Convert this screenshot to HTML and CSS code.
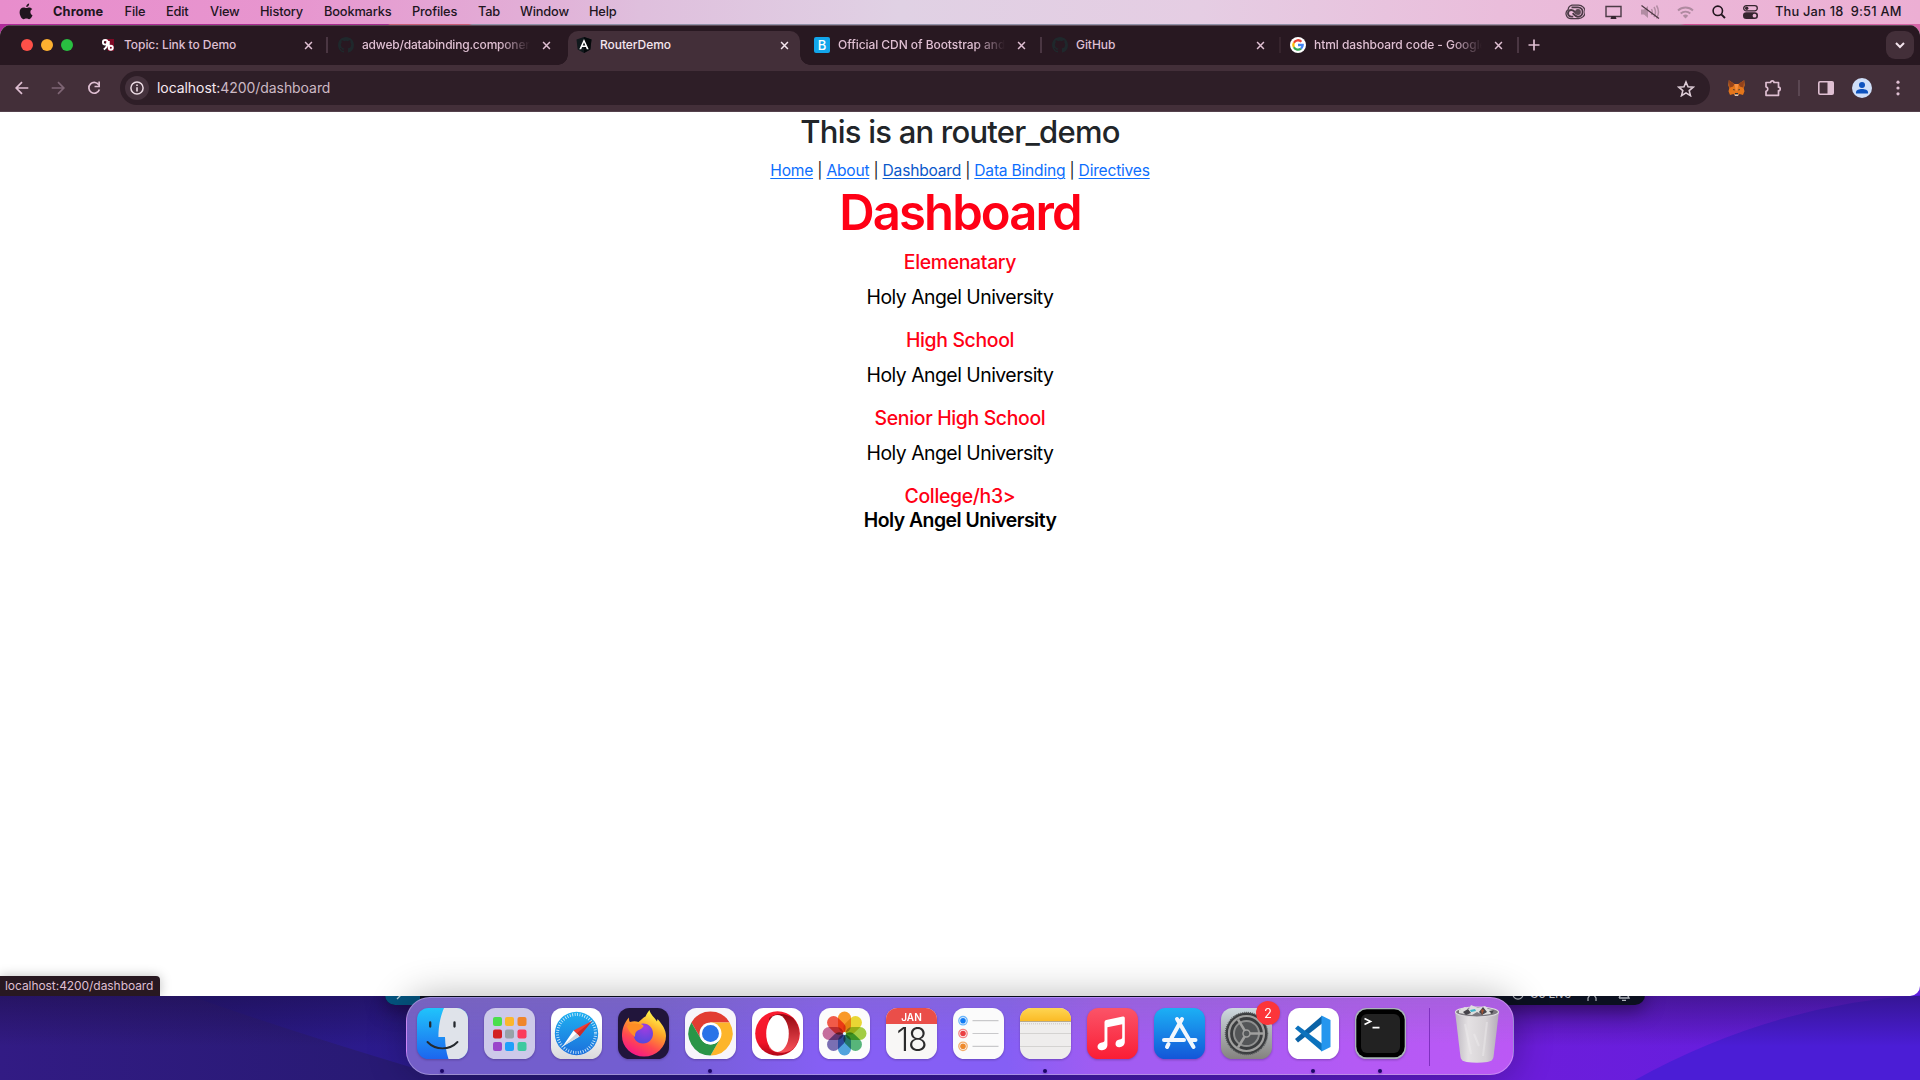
FILE: index.html
```html
<!DOCTYPE html>
<html lang="en">
<head>
<meta charset="utf-8">
<title>RouterDemo</title>
<link rel="stylesheet" href="styles.css">
</head>
<body>
<svg class="defs" aria-hidden="true">
  <defs>
    <symbol id="close" viewBox="0 0 10 10"><path d="M1.2 1.2l7.6 7.6M8.8 1.2L1.2 8.8" fill="none" stroke="currentColor" stroke-width="1.7"/></symbol>
    <symbol id="github" viewBox="0 0 16 16"><path fill="#1f282c" d="M8 0C3.58 0 0 3.58 0 8c0 3.54 2.29 6.53 5.47 7.59.4.07.55-.17.55-.38v-1.49c-2.01.37-2.53-.49-2.69-.94-.09-.23-.48-.94-.82-1.13-.28-.15-.68-.52-.01-.53.63-.01 1.08.58 1.23.82.72 1.21 1.87.87 2.33.66.07-.52.28-.87.51-1.07-1.78-.2-3.64-.89-3.64-3.95 0-.87.31-1.59.82-2.15-.08-.2-.36-1.02.08-2.12 0 0 .67-.21 2.2.82a7.6 7.6 0 0 1 4 0c1.53-1.04 2.2-.82 2.2-.82.44 1.1.16 1.92.08 2.12.51.56.82 1.27.82 2.15 0 3.07-1.87 3.75-3.65 3.95.29.25.54.73.54 1.48v2.2c0 .21.15.46.55.38A8 8 0 0 0 16 8c0-4.42-3.58-8-8-8z"/></symbol>
  </defs>
</svg>

<header class="menubar">
  <svg class="apple" width="14" height="17" viewBox="0 0 14 17"><path fill="#21151e" d="M11.4 8.9c0-1.6 1.2-2.4 1.9-2.8-.8-1.2-2-1.7-3-1.700-1.200 0-2 .7-2.900.7-.9 0-1.700-.7-2.800-.7C2.400 4.400.6 6 .6 9.200c0 3.200 2.200 7 4 7 1 0 1.600-.7 2.800-.7s1.700.7 2.700.7c1.600 0 2.900-2.600 3.400-4-1.300-.5-2.100-1.700-2.100-3.300zM9.400 3C10 2.200 10.200 1.300 10.100.4 8.900.5 7.200 1.600 7.200 4 8.100 4 8.900 3.600 9.400 3z"/></svg>
  <nav class="menus">
    <b>Chrome</b><span>File</span><span>Edit</span><span>View</span><span>History</span><span>Bookmarks</span><span>Profiles</span><span>Tab</span><span>Window</span><span>Help</span>
  </nav>
  <div class="tray">
    <svg width="20" height="16" viewBox="0 0 20 16"><path d="M7 1.200h6.500a6.300 6.300 0 0 1 0 13.400H6A5 5 0 0 1 3.200 5.500 5 5 0 0 1 7 1.200z" fill="none" stroke="#4b3b46" stroke-width="1.300"/><path d="M6.500 3.400h6.500a4.600 4.600 0 0 1 0 9.300c-2.400 0-3.700-1.700-5.300-3.600M11.800 9.800C9.500 7.500 8.700 6 6.300 6a3.300 3.300 0 0 0 0 6.600h2" fill="none" stroke="#4b3b46" stroke-width="1.900"/><circle cx="13" cy="8" r="2.900" fill="#5c4a55"/></svg>
    <svg width="17" height="15" viewBox="0 0 17 15"><path d="M1 1.500h15v10H1z" fill="none" stroke="#4b3b46" stroke-width="1.400"/><path d="M5.500 14l1-3h4l1 3z" fill="#35252f"/></svg>
    <svg width="20" height="16" viewBox="0 0 20 16"><path d="M1 5.500h3l4-3.500v12l-4-3.500H1z" fill="#b28ca3"/><path d="M11.500 5q1.500 3 0 6M14 3q3 5 0 10M16.500 1.500q4 6.500 0 13" fill="none" stroke="#b28ca3" stroke-width="1.500"/><path d="M1.500 1.500l17.500 13" stroke="#4b3641" stroke-width="1.200"/></svg>
    <svg width="17" height="13" viewBox="0 0 17 13"><path d="M1 4.500a11 11 0 0 1 15 0M3.700 7.500a7 7 0 0 1 9.600 0" fill="none" stroke="#af8aa0" stroke-width="1.900"/><path d="M8.500 12.500L5.800 9.800a4 4 0 0 1 5.400 0z" fill="#af8aa0"/></svg>
    <svg width="14" height="14" viewBox="0 0 14 14"><circle cx="5.800" cy="5.800" r="4.700" fill="none" stroke="#21151e" stroke-width="1.600"/><path d="M9.300 9.300L13 13" stroke="#21151e" stroke-width="1.900"/></svg>
    <svg width="15" height="14" viewBox="0 0 15 14"><rect x=".7" y=".7" width="13.600" height="5.200" rx="2.600" fill="none" stroke="#35252f" stroke-width="1.300"/><circle cx="3.700" cy="3.300" r="1.700" fill="#35252f"/><rect y="7.300" width="15" height="6.700" rx="3.300" fill="#35252f"/><circle cx="11.500" cy="10.650" r="1.900" fill="#e9b5d3"/></svg>
    <span class="clock">Thu Jan 18&nbsp; 9:51 AM</span>
  </div>
</header>

<main class="window">
  <div class="tabstrip">
    <div class="lights"><i class="red"></i><i class="amber"></i><i class="green"></i></div>
    <div class="tab tab-first">
      <svg class="fav" width="16" height="16" viewBox="0 0 16 16"><path fill="#7d0925" d="M4 2h10v12H8z"/><g fill="none" stroke="#fff" stroke-width="1.900"><circle cx="5.200" cy="5.300" r="2.300"/><path d="M7.400 5c.2 4-1.300 6-3.600 7.500M8.800 4V11"/><circle cx="10.800" cy="10.700" r="2"/></g></svg>
      <span class="title">Topic: Link to Demo</span><svg class="x"><use href="#close"/></svg>
    </div>
    <i class="split"></i>
    <div class="tab tab-second">
      <svg class="fav" width="16" height="16"><use href="#github"/></svg>
      <span class="title fade tight">adweb/databinding.component</span><svg class="x"><use href="#close"/></svg>
    </div>
    <div class="tab active">
      <svg class="fav" width="16" height="16" viewBox="0 0 16 16"><path fill="#11191d" d="M8 0l7.500 2.600-1.200 10L8 16l-6.300-3.400L.5 2.600z"/><path fill="#05090b" d="M8 0l7.500 2.600-1.200 10L8 16z"/><path fill="#fff" d="M8 1.900l4.700 10.400h-1.900l-.9-2.300H6.100l-.9 2.300H3.300zm0 3.600L6.700 8.500h2.600z"/></svg>
      <span class="title">RouterDemo</span><svg class="x"><use href="#close"/></svg>
    </div>
    <div class="tab tab-fourth">
      <span class="fav bootstrap">B</span>
      <span class="title fade">Official CDN of Bootstrap and</span><svg class="x"><use href="#close"/></svg>
    </div>
    <i class="split"></i>
    <div class="tab tab-fifth">
      <svg class="fav" width="16" height="16"><use href="#github"/></svg>
      <span class="title">GitHub</span><svg class="x"><use href="#close"/></svg>
    </div>
    <i class="split faint"></i>
    <div class="tab tab-sixth">
      <svg class="fav" width="16" height="16" viewBox="0 0 16 16"><circle cx="8" cy="8" r="8" fill="#fff"/><g fill="none" stroke-width="2.300"><path stroke="#ea4335" d="M3.900 5.700A4.700 4.700 0 0 1 11.400 4.700"/><path stroke="#fbbc05" d="M3.900 10.300a4.700 4.700 0 0 1 0-4.600"/><path stroke="#34a853" d="M3.900 10.300A4.700 4.700 0 0 0 11 11.600"/><path stroke="#4285f4" d="M8 8h4.700A4.700 4.700 0 0 1 11 11.600"/></g></svg>
      <span class="title fade">html dashboard code - Google</span><svg class="x"><use href="#close"/></svg>
    </div>
    <i class="split"></i>
    <svg class="plus" width="12" height="12" viewBox="0 0 12 12"><path d="M6 .5v11M.5 6h11" stroke="#dfbfd2" stroke-width="1.700"/></svg>
    <span class="tabsearch"><svg width="10" height="7" viewBox="0 0 10 7"><path d="M1 1l4 4 4-4" fill="none" stroke="#f3e4ec" stroke-width="2"/></svg></span>
  </div>

  <div class="toolbar">
    <div class="navbuttons">
      <svg width="14" height="14" viewBox="0 0 14 14"><path d="M13.300 7H1.500M7 1.200L1.200 7 7 12.800" fill="none" stroke="#dfbfd2" stroke-width="1.700"/></svg>
      <svg width="14" height="14" viewBox="0 0 14 14"><path d="M.7 7h11.800M7 1.200L12.800 7 7 12.800" fill="none" stroke="#7f6675" stroke-width="1.700"/></svg>
      <svg width="14" height="14" viewBox="0 0 14 14"><path d="M12 4.200A5.400 5.400 0 1 0 12.400 8.500" fill="none" stroke="#dfbfd2" stroke-width="1.700"/><path d="M13 .6v5.700H7.500V4.700h3.800V.6z" fill="#dfbfd2"/></svg>
    </div>
    <div class="omnibox">
      <span class="info"><svg width="14" height="14" viewBox="0 0 14 14"><circle cx="7" cy="7" r="6.100" fill="none" stroke="#ecdbe4" stroke-width="1.500"/><path d="M7 6.200V10.500M7 3.500V5" stroke="#ecdbe4" stroke-width="1.600"/></svg></span>
      <span class="url">localhost:<em>4200/dashboard</em></span>
      <svg class="star" width="18" height="17" viewBox="0 0 18 17"><path d="M9 2l2 4.800 5.200.4-4 3.400 1.300 5.100L9 12.900l-4.500 2.800 1.300-5.100-4-3.400L7 6.800z" fill="none" stroke="#dccbd5" stroke-width="1.600"/></svg>
    </div>
    <div class="actions">
      <svg width="17" height="16" viewBox="0 0 17 16"><path fill="#e4761b" d="M.8.300L6.500 4h4L16.200.3l.5 5-1 3 .8 3-1.500 3.700-3.500-1L10 15.700H7L5.500 14 2 15 .5 11.300l.8-3-1-3z"/><path fill="#93421c" d="M.8.300L6.500 4 5.200 6.500 1.500 7.700zM16.200.3L10.500 4l1.300 2.500 3.700 1.200z"/><path fill="#f59042" d="M6.500 4h4l-1.200 6.500H7.700z"/><path fill="#27333c" d="M4.800 9l2 .5-.7 1.200zM12.200 9l-2 .5.7 1.200zM7 13h3l.2 1.500H6.800z"/><path fill="#dbc9bd" d="M6.500 14.500h4L10 16H7z"/></svg>
      <svg width="18" height="18" viewBox="0 0 18 18"><path d="M2 3.500h4.600a1.700 1.700 0 0 1 3.400 0h4.500v4.700a1.700 1.700 0 0 1 0 3.400v4.700H2v-4a2.300 2.300 0 0 0 0-4.500z" fill="none" stroke="#dfbfd2" stroke-width="1.700" stroke-linejoin="round"/></svg>
      <i class="rule"></i>
      <svg width="16" height="14" viewBox="0 0 16 14"><rect x=".8" y=".8" width="14.400" height="12.400" rx="1.200" fill="none" stroke="#dfbfd2" stroke-width="1.600"/><path d="M9.500 1h5.700v12H9.500z" fill="#dfbfd2"/></svg>
      <svg width="20" height="20" viewBox="0 0 20 20"><circle cx="10" cy="10" r="10" fill="#cfdff9"/><circle cx="10" cy="7" r="3" fill="#0c52bf"/><path d="M4 15.500v-1.300c0-2 3-3.200 6-3.200s6 1.200 6 3.200v1.300z" fill="#0c52bf"/></svg>
      <svg width="4" height="16" viewBox="0 0 4 16"><g fill="#dfbfd2"><circle cx="2" cy="2.200" r="1.600"/><circle cx="2" cy="8" r="1.600"/><circle cx="2" cy="13.800" r="1.600"/></g></svg>
    </div>
  </div>

  <section class="page">
    <h2>This is an router_demo</h2>
    <nav class="links"><a>Home</a> | <a>About</a> | <a class="hover">Dashboard</a> | <a>Data Binding</a> | <a>Directives</a></nav>
    <h1>Dashboard</h1>
    <h3>Elemenatary</h3><p>Holy Angel University</p>
    <h3>High School</h3><p>Holy Angel University</p>
    <h3>Senior High School</h3><p>Holy Angel University</p>
    <h3>College/h3&gt;<span>Holy Angel University</span></h3>
  </section>
  <div class="linkstatus">localhost:4200/dashboard</div>
</main>

<svg class="wallpaper" viewBox="0 0 1920 100" preserveAspectRatio="none">
  <defs>
    <linearGradient id="wl"><stop offset="0" stop-color="#321b84"/><stop offset=".2" stop-color="#281a74"/><stop offset=".4" stop-color="#281784"/><stop offset=".62" stop-color="#4b1bb5"/><stop offset=".8" stop-color="#6c1ddb"/><stop offset="1" stop-color="#611fe0"/></linearGradient>
    <linearGradient id="wb"><stop offset="0" stop-color="#28187f"/><stop offset="1" stop-color="#2c1b90"/></linearGradient>
    <linearGradient id="ws" x2="0" y2="1"><stop offset="0" stop-color="#160a35" stop-opacity=".4"/><stop offset=".6" stop-color="#160a35" stop-opacity="0"/></linearGradient>
  </defs>
  <path fill="url(#wl)" d="M0 0h1920v100H0z"/>
  <path fill="url(#wb)" d="M185 14Q280 48 420 90V14z"/>
  <path fill="#4b1dd6" d="M1635 100Q1770 25 1920 15v85z"/>
  <path fill="url(#ws)" d="M0 16h1920v84H0z"/>
</svg>

<div class="editorbar">
  <span class="remote"><svg width="10" height="12" viewBox="0 0 10 12"><path d="M2 10l6-6" stroke="#b9d2dc" stroke-width="1.200"/></svg></span>
  <span class="golive"><svg width="12" height="12" viewBox="0 0 12 12"><circle cx="6" cy="6" r="5.200" fill="none" stroke="#aeb2ba" stroke-width="1.200"/><path d="M4 4l2 3 2-3" fill="none" stroke="#aeb2ba"/></svg>Go Live</span>
  <svg width="10" height="14" viewBox="0 0 10 14"><path d="M1 14V11l2-3h4l2 3v3" fill="none" stroke="#aeb2ba" stroke-width="1.200"/></svg>
  <svg width="12" height="14" viewBox="0 0 12 14"><path d="M1 11h10L9.500 8V2M1 11l1.500-3V2M4 13.300h4" fill="none" stroke="#aeb2ba" stroke-width="1.300"/></svg>
</div>

<footer class="dock">
  <!-- Finder -->
  <div class="app running"><svg viewBox="0 0 51 51"><defs><linearGradient id="fi" x2="0" y2="1"><stop stop-color="#20c4fb"/><stop offset="1" stop-color="#1c66ef"/></linearGradient><clipPath id="rr"><rect width="51" height="51" rx="11.500"/></clipPath></defs><g clip-path="url(#rr)"><path fill="url(#fi)" d="M0 0h51v51H0z"/><path fill="#dfe3ea" d="M27 0c-3 7-5.500 16-5.600 29H28c.2 8 1.200 15 3.500 22H51V0z"/></g><path d="M13.200 14.500v4M37.500 14.500v4" stroke="#24292e" stroke-width="2.300" stroke-linecap="round"/><path d="M10.500 34c8 8.500 22 8.500 30 0" fill="none" stroke="#24292e" stroke-width="1.900" stroke-linecap="round"/></svg></div>
  <!-- Launchpad -->
  <div class="app"><svg viewBox="0 0 51 51"><rect width="51" height="51" rx="11.500" fill="#cdc9e9"/><rect x="9" y="9" width="9" height="9" rx="2" fill="#4ade4c"/><rect x="21" y="9" width="9" height="9" rx="2" fill="#fbb62c"/><rect x="33.500" y="9" width="9" height="9" rx="2" fill="#f0852a"/><rect x="9" y="21.500" width="9" height="9" rx="2" fill="#d31f23"/><rect x="21" y="21.500" width="9" height="9" rx="2" fill="#97a1a8"/><rect x="33.500" y="21.500" width="9" height="9" rx="2" fill="#fb3b5c"/><rect x="9" y="34" width="9" height="9" rx="2" fill="#9a45cb"/><rect x="21" y="34" width="9" height="9" rx="2" fill="#1e9ffb"/><rect x="33.500" y="34" width="9" height="9" rx="2" fill="#3cc9a0"/></svg></div>
  <!-- Safari -->
  <div class="app"><svg viewBox="0 0 51 51"><defs><linearGradient id="wh" x2="0" y2="1"><stop offset=".3" stop-color="#fff"/><stop offset="1" stop-color="#d9d9dc"/></linearGradient><linearGradient id="sa" x2="0" y2="1"><stop stop-color="#1fb1f0"/><stop offset="1" stop-color="#1b6fdc"/></linearGradient></defs><rect width="51" height="51" rx="11.500" fill="url(#wh)"/><circle cx="25.500" cy="25.500" r="21.700" fill="url(#sa)"/><circle cx="25.500" cy="25.500" r="19" fill="none" stroke="#d8eefc" stroke-width="3" stroke-dasharray=".8 1.690"/><path fill="#f23c35" d="M41 13L22.500 22.500l6 6z"/><path fill="#c72c2c" d="M41 13L25.500 25.500l3 3z"/><path fill="#fff" d="M11.500 38.500l11-16 6 6z"/><path fill="#cfd7df" d="M11.500 38.500l14-13 3 3z"/></svg></div>
  <!-- Firefox -->
  <div class="app"><svg viewBox="0 0 51 51"><defs><linearGradient id="ff" x1=".8" y1="0" x2=".3" y2="1"><stop offset=".1" stop-color="#fff24a"/><stop offset=".4" stop-color="#ffa428"/><stop offset=".7" stop-color="#ff4a4f"/><stop offset="1" stop-color="#f6148a"/></linearGradient><radialGradient id="fp" cx=".6" cy=".2" r=".9"><stop stop-color="#a23ce0"/><stop offset="1" stop-color="#4a4bdc"/></radialGradient></defs><rect width="51" height="51" rx="11.500" fill="#21153b"/><path fill="url(#ff)" d="M31.500 2c1 5 5.500 7.500 7.500 11.500l.5-2.500c5 5.500 8.500 11 8.500 17a22 20.500 0 0 1-44 0c0-7 2-13 7-18.500 0 2 0 3.500 1 4.500 3-1 6-1 8.500 0C23 12 25 9.500 27.500 8.500c1-2.500 2.500-4.500 4-6.500z"/><path fill="url(#fp)" d="M25 15.500c6 0 10 4.500 10 10s-4 10-10 10-9.500-4.500-9.500-9.500c0-2 .5-4 1.500-5l8-2c1.500-1-.5-2.500-2.500-3z"/><path fill="#ff8d25" d="M9 18c5-4 13-3 16 .5-1 3-4 3-6 4.500-2 1.500-2 4-2 6-4-3-7-7-8-11z"/></svg></div>
  <!-- Chrome -->
  <div class="app running"><svg viewBox="0 0 51 51"><rect width="51" height="51" rx="11.500" fill="#f7f5fb"/><path fill="#e23c32" d="M6.400 14.500A22 22 0 0 1 44.600 14.500H25.500L16 31z"/><path fill="#fdb52a" d="M44.600 14.500A22 22 0 0 1 25.500 47.500L35 31 25.500 14.500z"/><path fill="#2a9547" d="M25.500 47.500A22 22 0 0 1 6.400 14.500L16 31a11 11 0 0 0 19 0z"/><circle cx="25.500" cy="25.500" r="11" fill="#fff"/><circle cx="25.500" cy="25.500" r="8.500" fill="#2a73e8"/></svg></div>
  <!-- Opera -->
  <div class="app"><svg viewBox="0 0 51 51"><defs><linearGradient id="op" x2="0" y2="1"><stop stop-color="#fb1c30"/><stop offset=".7" stop-color="#f01428"/><stop offset="1" stop-color="#b00718"/></linearGradient><linearGradient id="oq" x2="0" y2="1"><stop stop-color="#94060f"/><stop offset="1" stop-color="#fa525a"/></linearGradient></defs><rect width="51" height="51" rx="11.500" fill="#fff"/><circle cx="25.500" cy="25.500" r="22.300" fill="url(#op)"/><path fill="url(#oq)" d="M17 10c8-6.500 18-4 24 0a22.300 22.300 0 0 1 0 31c-7 5-17 5.500-24-1z"/><ellipse cx="25.500" cy="25.500" rx="11.300" ry="18.500" fill="#fff"/></svg></div>
  <!-- Photos -->
  <div class="app"><svg viewBox="0 0 51 51"><rect width="51" height="51" rx="11.500" fill="#fcfcfc"/><g class="petals"><rect x="19" y="3.500" width="13" height="21" rx="6.500" fill="#f9941e"/><rect x="19" y="3.500" width="13" height="21" rx="6.500" fill="#e8d52a" transform="rotate(45 25.500 25.500)"/><rect x="19" y="3.500" width="13" height="21" rx="6.500" fill="#9ecb3b" transform="rotate(90 25.500 25.500)"/><rect x="19" y="3.500" width="13" height="21" rx="6.500" fill="#4fb274" transform="rotate(135 25.500 25.500)"/><rect x="19" y="3.500" width="13" height="21" rx="6.500" fill="#489fdc" transform="rotate(180 25.500 25.500)"/><rect x="19" y="3.500" width="13" height="21" rx="6.500" fill="#7468b0" transform="rotate(225 25.500 25.500)"/><rect x="19" y="3.500" width="13" height="21" rx="6.500" fill="#c36697" transform="rotate(270 25.500 25.500)"/><rect x="19" y="3.500" width="13" height="21" rx="6.500" fill="#f1523f" transform="rotate(315 25.500 25.500)"/></g><circle cx="25.500" cy="25.500" r="1.500" fill="#dff"/></svg></div>
  <!-- Calendar -->
  <div class="app calendar"><span class="month">JAN</span><span class="day">18</span></div>
  <!-- Reminders -->
  <div class="app"><svg viewBox="0 0 51 51"><rect width="51" height="51" rx="11.500" fill="#fbfbfb"/><path d="M19.500 12.700h26M19.500 25.500h26M19.500 38.300h26" stroke="#c9c9cb" stroke-width="1.200"/><g fill="none" stroke-width="1.300"><circle cx="10" cy="12.700" r="4.200" stroke="#6cb5fb"/><circle cx="10" cy="25.500" r="4.200" stroke="#f58485"/><circle cx="10" cy="38.300" r="4.200" stroke="#f3ad6b"/></g><circle cx="10" cy="12.700" r="2.800" fill="#127cf5"/><circle cx="10" cy="25.500" r="2.800" fill="#ea3f42"/><circle cx="10" cy="38.300" r="2.800" fill="#ee8a2d"/></svg></div>
  <!-- Notes -->
  <div class="app running"><svg viewBox="0 0 51 51"><defs><linearGradient id="no" x2="0" y2="1"><stop stop-color="#fed552"/><stop offset="1" stop-color="#fbbb26"/></linearGradient></defs><g clip-path="url(#rr)"><path fill="#eeedec" d="M0 0h51v51H0z"/><path fill="url(#no)" d="M0 0h51v13H0z"/><path d="M0 13.500h51" stroke="#b7a98a"/><path d="M1 15.800h50" stroke="#c9c7c4" stroke-dasharray="1 1"/><path d="M0 25.500h51M0 38.500h51" stroke="#d4d3d1"/></g></svg></div>
  <!-- Music -->
  <div class="app"><svg viewBox="0 0 51 51"><defs><linearGradient id="mu" x2="0" y2="1"><stop stop-color="#fb5468"/><stop offset="1" stop-color="#fa1d35"/></linearGradient></defs><rect width="51" height="51" rx="11.500" fill="url(#mu)"/><path fill="#fff" d="M17.500 14q0-1.700 1.700-2.100l16.600-3.400q2-.4 2 1.500V34c0 3-2.500 5-5.300 5.200-2.500.2-4-1.300-4-3.300 0-2.500 1.700-3.900 4-4.300 2-.4 2.700-.8 2.700-2.300V16.200l-14.800 3V37c0 3-2.300 5-5.300 5.200-2.600.2-4.600-1-4.600-3.400 0-2.400 1.700-4 4.300-4.400 1.800-.3 2.700-.7 2.700-2.200z"/></svg></div>
  <!-- App Store -->
  <div class="app"><svg viewBox="0 0 51 51"><defs><linearGradient id="as" x2="0" y2="1"><stop stop-color="#1cb0f5"/><stop offset="1" stop-color="#1356d8"/></linearGradient></defs><rect width="51" height="51" rx="11.500" fill="url(#as)"/><g stroke="#f2f7fd" stroke-width="4" stroke-linecap="round"><path d="M28 11L17.500 30M23 11l16.500 28M10 32h20M36.500 32h5M14.500 36l-1.500 3"/></g></svg></div>
  <!-- System Settings -->
  <div class="app"><svg viewBox="0 0 51 51"><defs><linearGradient id="se" x2="0" y2="1"><stop stop-color="#ced9df"/><stop offset="1" stop-color="#84827f"/></linearGradient></defs><rect width="51" height="51" rx="11.500" fill="url(#se)"/><circle cx="25.500" cy="25.500" r="21" fill="#3b3d3f" stroke="#55585a" stroke-width="1.500" stroke-dasharray="1 1"/><circle cx="25.500" cy="25.500" r="17.500" fill="none" stroke="#a0a09f" stroke-width="2.200"/><circle cx="25.500" cy="25.500" r="12.500" fill="#545658" stroke="#8f9090" stroke-width="2"/><path d="M25.500 25.500H42M25.500 25.500L17 11.500M25.500 25.500L17 39.500" stroke="#a0a09f" stroke-width="2.500"/><circle cx="25.500" cy="25.500" r="3.500" fill="#55585a" stroke="#a0a09f" stroke-width="1.500"/></svg><span class="badge">2</span></div>
  <!-- Visual Studio Code -->
  <div class="app running"><svg viewBox="0 0 51 51"><rect width="51" height="51" rx="11.500" fill="#fff"/><path fill="#0a62a6" d="M7 31l3 3.500 24-19V7.800z"/><path fill="#0b72bd" d="M7 20.500l3-3 24 18v8z"/><path fill="#2596ee" d="M33.500 7.500L42.500 12v27l-9 4.500z"/></svg></div>
  <!-- Terminal -->
  <div class="app running"><svg viewBox="0 0 51 51"><rect width="51" height="51" rx="11.500" fill="#a9b4b7"/><rect x="1.300" y="1.300" width="48.400" height="48" rx="10.500" fill="#000"/><rect x="6" y="6" width="39" height="39" rx="6" fill="#222"/><path d="M9.500 10.500l6 3-6 3M17.500 19.700h7" fill="none" stroke="#fff" stroke-width="1.700"/></svg></div>
  <i class="divider"></i>
  <!-- Trash -->
  <svg class="trash" width="46" height="60" viewBox="0 0 46 60"><defs><linearGradient id="tr"><stop stop-color="#bdb8c0"/><stop offset=".3" stop-color="#e4e1e3"/><stop offset=".7" stop-color="#d6d2d5"/><stop offset="1" stop-color="#b3abb7"/></linearGradient></defs><path fill="url(#tr)" d="M1 7l5.500 46q.5 4 6 5 10.500 1.500 21 0 5.500-1 6-5L45 7z"/><ellipse cx="23" cy="8" rx="21.500" ry="5" fill="#7b777e" stroke="#dedbe0" stroke-width="1.200"/><path fill="#dedede" d="M5 6l6-3 4 2 2-4 7 3 7-2 3 3 6 1-4 4-7 1-6-3-5 3-7-1-6-1z"/><path fill="#45434a" d="M9 8l5-3 3 4-5 2zM25 8l4-5 4 5-5 3zM35 7l5-1-2 4z"/><path fill="#3eb4c8" d="M16 6l5-1 1 2-5 1z"/><path fill="#a45231" d="M27 5l3 1-2 5z"/><path d="M11 20l6 30M33 18l-4 34M20 30l5 12" stroke="#f2f0f1" stroke-width="2" opacity=".4"/></svg>
</footer>
</body>
</html>
```
FILE: styles.css
```css
* { box-sizing: border-box; }

body {
  margin: 0;
  width: 1920px;
  height: 1080px;
  overflow: hidden;
  position: relative;
  display: flex;
  flex-direction: column;
  font-family: Inter, "Liberation Sans", sans-serif;
  background: linear-gradient(90deg, #b02a9a 0, #a52b8c 388px, #c65a74 390px, #c65a74 469px, #8f8fa6 472px, #8f8fa6 1280px, #a58aa0 1680px, #cc4c92 1685px, #d667a8 100%);
}

svg { display: block; flex: none; }
i { display: block; flex: none; }
.defs { position: absolute; width: 0; height: 0; }

/* macOS menu bar */
.menubar {
  height: 24px;
  flex: none;
  display: flex;
  align-items: center;
  background: linear-gradient(90deg, #e88dcc 0, #e796cf 300px, #e2add6 520px, #dfbfdd 640px, #e0d1e4 900px, #e5cde3 1200px, #eabddb 1500px, #ecaed3 1920px);
  font-size: 12.8px;
  font-weight: 500;
  color: #21151e;
}
.apple { margin: -2px 19px 0 19px; }
.menus {
  display: grid;
  grid-template-columns: 71.5px 41.5px 44px 50px 64px 88px 66px 42px 69px 60px;
  padding: 0 0 1px 1px;
  letter-spacing: -0.16px;
}
.menus b { font-weight: 700; letter-spacing: 0.12px; }
.menus span, .menus b { white-space: nowrap; }
.tray { margin-left: auto; display: flex; align-items: center; padding-right: 17px; }
.tray svg:nth-child(1) { margin-right: 20px; }
.tray svg:nth-child(2) { margin-right: 18px; }
.tray svg:nth-child(3) { margin-right: 17px; }
.tray svg:nth-child(4) { margin-right: 18px; }
.tray svg:nth-child(5) { margin-right: 17px; }
.tray svg:nth-child(6) { margin-right: 17px; }
.clock { width: 128px; padding-bottom: 1px; white-space: nowrap; letter-spacing: 0.22px; }

/* Browser window */
.window {
  position: relative;
  z-index: 2;
  margin-top: 1px;
  height: 971px;
  flex: none;
  display: flex;
  flex-direction: column;
  border-radius: 11px 11px 10px 0;
  overflow: hidden;
  background: #fff;
}
.tabstrip {
  height: 40px;
  flex: none;
  display: flex;
  align-items: center;
  background: #281821;
  border-top: 1px solid #5d4c58;
  padding-bottom: 1px;
  color: #dfbfd2;
  font-size: 12px;
  font-weight: 500;
}
.lights { display: flex; gap: 8px; padding: 0 27px 0 21px; }
.lights i { width: 12px; height: 12px; border-radius: 50%; }
.red { background: #fe5048; }
.amber { background: #fdb030; }
.green { background: #29bf41; }
.tab { display: flex; align-items: center; height: 34px; flex: none; }
.fav { flex: none; margin-right: 8px; }
.title { flex: 1; min-width: 0; white-space: nowrap; overflow: hidden; line-height: 18px; letter-spacing: -0.06px; }
.tight { letter-spacing: -0.2px; }
.fade { -webkit-mask-image: linear-gradient(90deg, #000 calc(100% - 30px), transparent); mask-image: linear-gradient(90deg, #000 calc(100% - 30px), transparent); }
.x { width: 9px; height: 9px; margin-left: 12px; color: #dfbfd2; }
.tab-first { width: 226px; padding-right: 13px; }
.tab-second { width: 240px; padding: 0 17px 0 10px; }
.tab-fourth { width: 240px; padding: 0 14px; }
.tab-fifth { width: 237px; padding: 0 14px 0 10px; }
.tab-sixth { width: 236px; padding: 0 14px 0 9px; }
.active {
  position: relative;
  width: 232px;
  align-self: flex-end;
  margin-bottom: -1px;
  padding: 0 11px 6px 8px;
  border-radius: 10px 10px 0 0;
  background: #432f39;
  color: #f4e6ee;
}
.active .x { color: #f4e6ee; }
.active::before, .active::after {
  content: "";
  position: absolute;
  bottom: 0;
  width: 10px;
  height: 10px;
}
.active::before { left: -10px; background: radial-gradient(circle at 0 0, transparent 9.5px, #432f39 10px); }
.active::after { right: -10px; background: radial-gradient(circle at 100% 0, transparent 9.5px, #432f39 10px); }
.split { width: 2px; height: 16px; background: #4a3642; }
.faint { opacity: 0.4; }
.bootstrap {
  width: 16px;
  height: 16px;
  border-radius: 2px;
  background: #12a5ea;
  color: #fff;
  font-size: 13px;
  line-height: 16px;
  text-align: center;
}
.plus { margin-left: 9px; }
.tabsearch {
  width: 28px;
  height: 28px;
  margin: 0 6px 0 auto;
  border-radius: 9px;
  background: #432f39;
  display: grid;
  place-items: center;
}

.toolbar {
  height: 47px;
  flex: none;
  display: flex;
  align-items: center;
  background: #432f39;
  border-bottom: 1px solid #54424c;
}
.navbuttons { display: flex; gap: 22px; width: 120px; padding-left: 15px; }
.omnibox {
  width: 1590px;
  height: 34px;
  border-radius: 17px;
  background: #2e1e27;
  display: flex;
  align-items: center;
  padding: 0 15px 0 5px;
}
.info { width: 24px; height: 24px; border-radius: 50%; background: #45323d; display: grid; place-items: center; }
.url { margin-left: 8px; padding-bottom: 1px; font-size: 14px; color: #f6e9f0; letter-spacing: -0.06px; }
.url em { font-style: normal; color: #ccb9c4; }
.star { margin-left: auto; }
.actions { display: flex; align-items: center; padding-left: 18px; }
.actions svg:nth-child(1) { margin-right: 19px; }
.actions svg:nth-child(2) { margin-right: 16px; }
.actions svg:nth-child(4) { margin-right: 18px; }
.actions svg:nth-child(5) { margin-right: 24px; }
.rule { width: 2px; height: 16px; margin-right: 18px; background: #5b4752; }

/* Web page */
.page {
  flex: 1;
  text-align: center;
  font-size: 15.6px;
  line-height: 24px;
  color: #212529;
  letter-spacing: -0.22px;
}
.page h2 { margin: 0; padding-top: 1px; font-size: 31px; line-height: 38.4px; font-weight: 550; letter-spacing: -0.76px; }
.links { padding-top: 8px; }
.links a { color: #0d6efd; text-decoration: underline; text-underline-offset: 2px; }
.links a.hover { color: #0a58ca; }
.page h1 { margin: 0 0 7px; font-size: 49px; line-height: 60px; font-weight: 560; letter-spacing: -1.9px; color: #ff0015; }
.page h3 { margin: 0 0 8px; font-size: 19.4px; line-height: 24px; font-weight: 500; letter-spacing: -0.33px; color: #ff0015; }
.page h3 span { display: block; color: #000; font-weight: 600; letter-spacing: -0.5px; }
.page p { margin: 0 0 16px; font-size: 19.4px; line-height: 30px; letter-spacing: -0.51px; color: #000; }
.linkstatus {
  position: absolute;
  left: 0;
  bottom: 0;
  width: 160px;
  height: 20px;
  padding-left: 5px;
  border-radius: 0 4px 0 0;
  background: #281821;
  box-shadow: 0 0 12px rgba(0, 0, 0, 0.25);
  color: #dfbfd2;
  font-size: 12px;
  line-height: 20px;
  letter-spacing: -0.06px;
}

/* Desktop behind the windows */
.wallpaper { position: absolute; left: 0; top: 980px; width: 1920px; height: 100px; }
.editorbar {
  position: absolute;
  z-index: 1;
  left: 385px;
  top: 982px;
  width: 1260px;
  height: 23px;
  border-radius: 0 0 10px 10px;
  background: #0b1020;
  box-shadow: 0 6px 18px rgba(20, 0, 40, 0.5);
  overflow: hidden;
  display: flex;
  align-items: center;
  padding-right: 15px;
  color: #b9bcc4;
  font-size: 12px;
}
.editorbar > svg { margin-left: 16px; }
.editorbar > svg:last-child { margin-left: 21px; }
.remote { width: 35px; height: 23px; background: #04547f; padding: 7px 0 0 10px; }
.golive { margin-left: auto; display: flex; align-items: center; gap: 6px; letter-spacing: -0.2px; }

/* Dock */
.dock {
  position: relative;
  z-index: 3;
  width: 1108px;
  height: 78px;
  flex: none;
  margin: 1px 0 0 406px;
  padding: 11px 0 0 11px;
  display: flex;
  gap: 16px;
  align-items: flex-start;
  border: 1px solid rgba(255, 255, 255, 0.28);
  border-radius: 24px;
  background:
    linear-gradient(180deg, rgba(130, 110, 170, 0.3), rgba(130, 110, 170, 0) 60%),
    linear-gradient(90deg, #735ec8 0, #735ed2 250px, #865ff5 420px, #855ff5 600px, #a05cf2 690px, #a45cf2 780px, #b45af5 950px, #bb58f5 100%);
  box-shadow: 0 0 38px rgba(0, 0, 0, 0.3);
}
.dock .app, .divider { margin-top: -1px; }
.app { position: relative; width: 51px; height: 51px; flex: none; filter: drop-shadow(0 1px 1px rgba(30, 10, 60, 0.3)); }
.app:first-child { margin-left: -1px; }
.app svg { width: 51px; height: 51px; }
.petals rect { mix-blend-mode: multiply; }
.petals { opacity: 0.95; }
.running::after {
  content: "";
  position: absolute;
  left: 23px;
  top: 61px;
  width: 4px;
  height: 4px;
  border-radius: 50%;
  background: #1c0668;
}
.calendar { border-radius: 11.5px; overflow: hidden; background: #f8f7f6; text-align: center; color: #2b2b2c; }
.month { display: block; height: 16px; background: #ea4e49; color: #fff; font-size: 10px; font-weight: 600; line-height: 18px; }
.day { display: block; font-size: 32px; font-weight: 300; line-height: 32px; letter-spacing: -1px; }
.badge {
  position: absolute;
  left: 35px;
  top: -7px;
  width: 24px;
  height: 24px;
  border-radius: 50%;
  background: #fc3539;
  color: #fff;
  font-size: 13px;
  line-height: 24px;
  text-align: center;
}
.divider { width: 1px; height: 58px; margin-left: 7px; background: #8030c0; }
.dock .trash { margin: -5px 0 0 8px; }
```
